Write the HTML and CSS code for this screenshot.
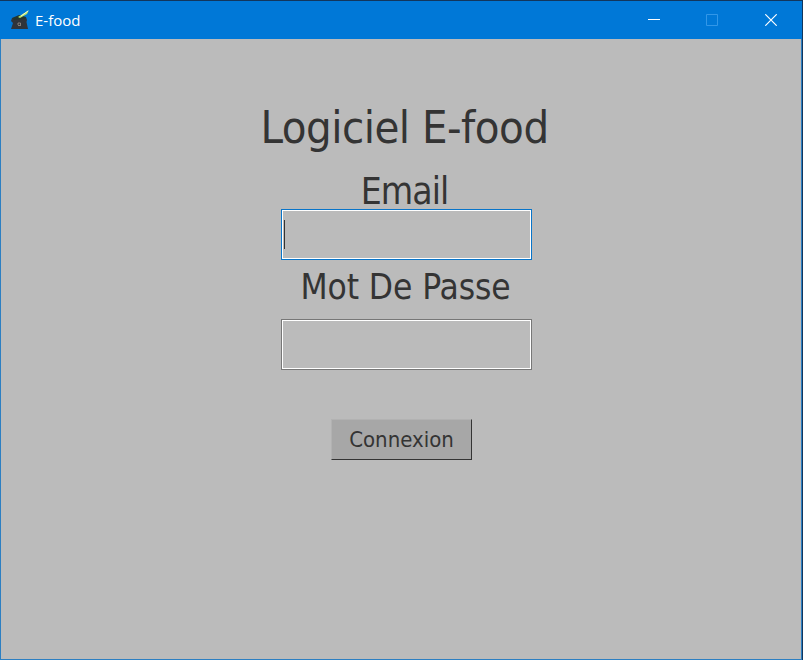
FILE: index.html
```
<!DOCTYPE html>
<html lang="fr">
<head>
<meta charset="utf-8">
<title>E-food</title>
<link rel="stylesheet" href="styles.css">
</head>
<body>
<div class="window">
  <header class="titlebar">
    <svg class="app-icon" width="22" height="22" viewBox="0 0 22 22">
      <path d="M3 9L17 8L18 11L17.500 13L19 20L2 20L4 14L2 12Z" fill="#30343a"/>
      <path d="M3 9L10 6L17 8L16 10L5 11Z" fill="#24352f"/>
      <path d="M9 8L17 3L20 1L18 5L11 9Z" fill="#b7e66b"/>
      <path d="M12 7L19 2" stroke="#f2f7d0" stroke-width="1"/>
      <path d="M9 16V14H11.500V16M9 16.500H12" fill="none" stroke="#a89c94" stroke-width=".7"/>
    </svg>
    <span class="name">E-food</span>
    <div class="controls">
      <svg width="12" height="12" viewBox="0 0 12 12"><path d="M0 5.500H12" stroke="#fff"/></svg>
      <svg width="12" height="12" viewBox="0 0 12 12"><path d="M.5 .5H11.500V11.500H.5Z" fill="none" stroke="#3297e8"/></svg>
      <svg width="12" height="12" viewBox="0 0 12 12"><path d="M.3 .3L11.700 11.700M11.700 .3L.3 11.700" stroke="#fff" stroke-width="1.200"/></svg>
    </div>
  </header>
  <main class="login">
    <h1><span>Logiciel E-food</span></h1>
    <label class="email"><span>Email</span></label>
    <div class="field focused"><i class="caret"></i></div>
    <label class="password"><span>Mot De Passe</span></label>
    <div class="field"></div>
    <button><span>Connexion</span></button>
  </main>
</div>
</body>
</html>
```
FILE: styles.css
```
* { box-sizing: border-box; }
body {
  margin: 0;
  width: 803px;
  height: 660px;
  overflow: hidden;
  background: #12365c;
  font-family: "DejaVu Sans Condensed", "DejaVu Sans", sans-serif;
  font-stretch: condensed;
  color: #343434;
}
.window {
  width: 802px;
  height: 659px;
  margin-top: 1px;
  border: 1px solid #2c7fc2;
  border-top: 0;
  background: #bbb;
}
.titlebar {
  display: flex;
  align-items: center;
  height: 38px;
  margin: 0 -1px;
  padding: 0 25px 0 9px;
  background: #0078d7;
  color: #fff;
}
.app-icon { flex: none; }
.name {
  margin-left: 4px;
  font: 15px/20px "Open Sans", sans-serif;
}
.controls {
  display: flex;
  gap: 47px;
  margin-left: auto;
}
.controls svg:nth-child(2) { margin: 0 0 0 -1px; }
.login {
  display: flex;
  flex-direction: column;
  align-items: center;
  width: 251px;
  margin-left: 280px;
}
h1, label {
  display: flex;
  justify-content: center;
  margin: 0;
  padding-right: 4px;
  font-weight: 400;
  white-space: nowrap;
}
h1 {
  height: 60px;
  margin-top: 59px;
  font-size: 45px;
  line-height: 60px;
  letter-spacing: -.5px;
}
.email {
  height: 45px;
  margin-top: 6px;
  font-size: 37px;
  line-height: 55px;
  letter-spacing: -1px;
}
.password {
  height: 59px;
  padding-right: 2px;
  font-size: 35px;
  line-height: 54px;
  letter-spacing: -.1px;
}
.field {
  display: flex;
  width: 251px;
  height: 51px;
  padding: 10px 1px;
  border: 1px solid #777;
  box-shadow: inset 0 0 0 1px #fff;
}
.field.focused { border: 1px solid #0874c9; }
.caret { width: 1px; height: 29px; margin-left: 1px; background: #333; }
button {
  width: 141px;
  height: 41px;
  margin: 49px 10px 0 0;
  padding: 1px 0 0;
  border: 1px solid;
  border-color: #b2b2b2 #343434 #343434 #b2b2b2;
  background: #a7a7a7;
  color: #343434;
  font: 22px/38px "DejaVu Sans Condensed", "DejaVu Sans", sans-serif;
  font-stretch: condensed;
}
```
